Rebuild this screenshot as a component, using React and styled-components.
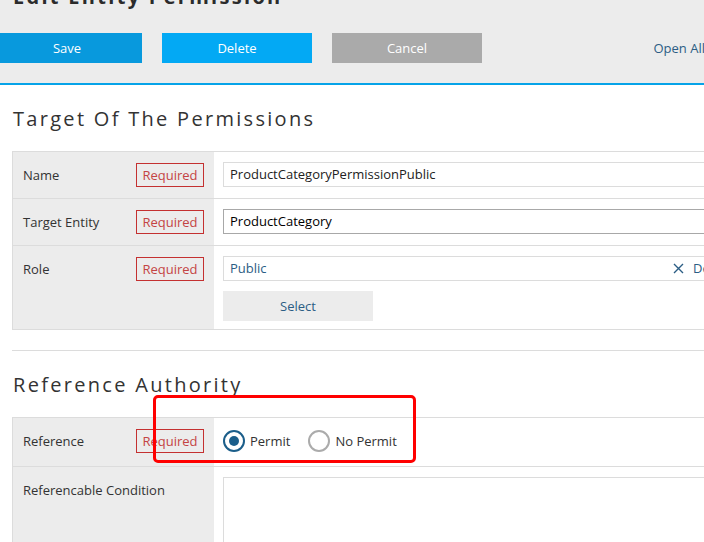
import styled, { createGlobalStyle } from "styled-components";

const Global = createGlobalStyle`
  html, body { margin: 0; padding: 0; overflow: hidden; background: #fff; }
  body { font-family: "Open Sans", "Noto Sans", sans-serif; font-size: 13px; color: #333; }
  * { box-sizing: border-box; }
`;

const Page = styled.div`
  position: relative;
  width: 760px;
`;

const Header = styled.div`
  height: 85px;
  background: #ececec;
  border-bottom: 2px solid #06a3e8;
  overflow: hidden;
`;

const PageTitle = styled.h1`
  margin: -17px 0 0 13px;
  font-size: 20px;
  font-weight: 700;
  letter-spacing: 2.3px;
  color: #2b2b2b;
  line-height: 27px;
`;

const Toolbar = styled.div`
  display: flex;
  align-items: center;
  gap: 20px;
  margin: 23px 0 0 -8px;
`;

const Button = styled.button`
  width: 150px;
  height: 30px;
  border: none;
  background: ${p => p.bg};
  color: #fff;
  font-family: inherit;
  font-size: 13px;
  padding: 0;
`;

const OpenAll = styled.a`
  margin-left: auto;
  margin-right: 55px;
  color: #2b5d84;
  font-size: 13px;
`;

const Section = styled.section`
  padding: 0 0 0 12px;
`;

const Heading = styled.h2`
  margin: 20px 0 19px 1px;
  font-size: 20px;
  font-weight: 400;
  letter-spacing: 2.3px;
  line-height: 27px;
  color: #333;
`;

const Table = styled.div`
  display: grid;
  grid-template-columns: 201px 1fr;
  border-top: 1px solid #dcdcdc;
  border-left: 1px solid #dcdcdc;
`;

const Label = styled.div`
  background: #ececec;
  border-bottom: 1px solid #dcdcdc;
  display: flex;
  justify-content: space-between;
  align-items: flex-start;
  padding: 11px 10px 10px 10px;
  min-height: ${p => p.h || 0}px;
`;

const LabelText = styled.span`
  line-height: 24px;
  color: #333;
`;

const Required = styled.span`
  border: 1px solid #c43030;
  color: #c44444;
  height: 24px;
  line-height: 22px;
  padding: 0 5.5px;
`;

const Value = styled.div`
  border-bottom: 1px solid #dcdcdc;
  padding: 10px 0 ${p => p.pb ?? 11}px 9px;
  display: flex;
  flex-direction: column;
  gap: 10px;
`;

const Input = styled.div`
  height: 25px;
  border: 1px solid ${p => (p.focus ? "#a8a8a8" : "#dcdcdc")};
  padding: 0 6px;
  line-height: 23px;
  color: ${p => p.color || "#222"};
  display: flex;
  align-items: center;
`;

const Chip = styled.span`
  margin-left: auto;
  margin-right: -4px;
  display: flex;
  align-items: center;
  gap: 9px;
  color: #2b5d84;
  width: 84px;
`;

const SelectButton = styled.button`
  width: 150px;
  height: 30px;
  border: none;
  background: #ececec;
  color: #2b5d84;
  font-family: inherit;
  font-size: 13px;
`;

const Rule = styled.hr`
  border: none;
  border-top: 1px solid #dcdcdc;
  margin: 20px 0 0 0;
`;

const RadioGroup = styled.div`
  display: flex;
  align-items: center;
  gap: 18px;
  height: 27px;
  margin-top: -1px;
`;

const Radio = styled.label`
  display: flex;
  align-items: center;
  gap: 5px;
  color: #333;
`;

const Dot = styled.span`
  width: 22px;
  height: 22px;
  border-radius: 50%;
  border: 2px solid ${p => (p.on ? "#1b5e8a" : "#ababab")};
  display: flex;
  align-items: center;
  justify-content: center;
  &::after {
    content: "";
    width: 10px;
    height: 10px;
    border-radius: 50%;
    background: ${p => (p.on ? "#1b5e8a" : "transparent")};
  }
`;

const TextArea = styled.div`
  height: 90px;
  border: 1px solid #dcdcdc;
`;

const Highlight = styled.div`
  position: absolute;
  left: 153px;
  top: 395px;
  width: 263px;
  height: 68px;
  border: 3px solid #ff0000;
  border-radius: 5px;
  pointer-events: none;
`;

const Close = () => (
  <svg width="11" height="11" viewBox="0 0 11 11">
    <path d="M1 1 L10 10 M10 1 L1 10" stroke="#2b5d84" strokeWidth="1.4" />
  </svg>
);

export default function App() {
  return (
    <Page>
      <Global />
      <Header>
        <PageTitle>Edit Entity Permission</PageTitle>
        <Toolbar>
          <Button bg="#0899dd">Save</Button>
          <Button bg="#03a9f4">Delete</Button>
          <Button bg="#aaaaaa">Cancel</Button>
          <OpenAll>Open All</OpenAll>
        </Toolbar>
      </Header>

      <Section>
        <Heading>Target Of The Permissions</Heading>
        <Table>
          <Label>
            <LabelText>Name</LabelText>
            <Required>Required</Required>
          </Label>
          <Value>
            <Input>ProductCategoryPermissionPublic</Input>
          </Value>
          <Label>
            <LabelText>Target Entity</LabelText>
            <Required>Required</Required>
          </Label>
          <Value>
            <Input focus color="#000">ProductCategory</Input>
          </Value>
          <Label>
            <LabelText>Role</LabelText>
            <Required>Required</Required>
          </Label>
          <Value pb={8}>
            <Input color="#2b5d84">
              Public
              <Chip>
                <Close />
                Delete
              </Chip>
            </Input>
            <SelectButton>Select</SelectButton>
          </Value>
        </Table>
        <Rule />

        <Heading>Reference Authority</Heading>
        <Table>
          <Label>
            <LabelText>Reference</LabelText>
            <Required>Required</Required>
          </Label>
          <Value pb={12}>
            <RadioGroup>
              <Radio>
                <Dot on />
                Permit
              </Radio>
              <Radio>
                <Dot />
                No Permit
              </Radio>
            </RadioGroup>
          </Value>
          <Label h={120}>
            <LabelText>Referencable Condition</LabelText>
          </Label>
          <Value>
            <TextArea />
          </Value>
        </Table>
      </Section>
      <Highlight />
    </Page>
  );
}
